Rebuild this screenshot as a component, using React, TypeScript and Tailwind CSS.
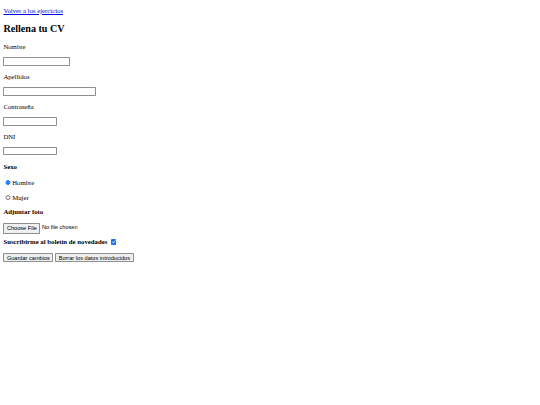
import React from "react";

export default function App() {
  const label = "mt-[7.9px] mb-[5.6px]";
  const field = "mt-[5.6px] mb-[7.9px]";
  const row = "my-[7.1px] h-[7.9px] whitespace-nowrap";
  const textInput =
    "block h-[8.6px] border border-[#8f8f8f] rounded-[0.8px] bg-white px-[0.84px] py-[0.42px] text-[5.625px] font-['Liberation_Sans',sans-serif]";
  const btn =
    "align-baseline bg-[#efefef] border border-[#8f8f8f] rounded-[0.8px] px-[2.53px] py-[0.42px] text-[5.625px] leading-[normal] font-['Liberation_Sans',sans-serif] text-black";
  const radio = "ml-[2.1px] mr-[1.27px] mt-[1.27px] h-[5.5px] w-[5.5px] align-baseline";
  return (
    <div className="min-h-[405px] bg-white px-[3.375px] pt-px -mt-px font-['Liberation_Serif',serif] text-[6.75px] leading-[7.9px] text-black">
      <p className="my-[6.75px]">
        <a href="#" className="text-[#0000ee] underline">
          Volver a los ejercicios
        </a>
      </p>
      <h2 className="my-[8.4px] text-[10.125px] leading-[12px] font-bold">Rellena tu CV</h2>
      <form onSubmit={(e) => e.preventDefault()}>
        <p className={label}>Nombre</p>
        <p className={field}>
          <input type="text" className={`${textInput} w-[67px]`} />
        </p>
        <p className={label}>Apellidos</p>
        <p className={field}>
          <input type="text" className={`${textInput} w-[92.5px]`} />
        </p>
        <p className={label}>Contraseña</p>
        <p className={field}>
          <input type="password" className={`${textInput} w-[54px]`} />
        </p>
        <p className={label}>DNI</p>
        <p className={field}>
          <input type="text" className={`${textInput} w-[54px]`} />
        </p>
        <p className={`${row} font-bold`}>Sexo</p>
        <p className={row}>
          <input type="radio" name="sexo" defaultChecked className={radio} />
          Hombre
        </p>
        <p className={row}>
          <input type="radio" name="sexo" className={radio} />
          Mujer
        </p>
        <p className={`${row} font-bold`}>Adjuntar foto</p>
        <p className={row}>
          <input
            type="file"
            className="align-baseline text-[5.625px] font-['Liberation_Sans',sans-serif] file:mr-[1.7px] file:rounded-[0.8px] file:border file:border-[#8f8f8f] file:bg-[#efefef] file:px-[2.53px] file:py-[0.42px] file:text-black"
          />
        </p>
        <p className={row}>
          <b>Suscribirme al boletín de novedades</b>{" "}
          <span className="relative ml-[1.7px] inline-block h-[5.5px] w-[5.5px] align-[-0.3px]">
            <input
              type="checkbox"
              defaultChecked
              className="block h-full w-full appearance-none rounded-[1px] bg-[#1a73e8]"
            />
            <svg
              viewBox="0 0 12 12"
              className="pointer-events-none absolute inset-0 h-full w-full"
            >
              <path d="M2.5 6.2 L5 8.6 L9.6 3.4" fill="none" stroke="white" strokeWidth="1.8" />
            </svg>
          </span>
        </p>
        <p className={row}>
          <button type="submit" className={btn}>
            Guardar cambios
          </button>{" "}
          <button type="reset" className={btn}>
            Borrar los datos introducidos
          </button>
        </p>
      </form>
    </div>
  );
}
